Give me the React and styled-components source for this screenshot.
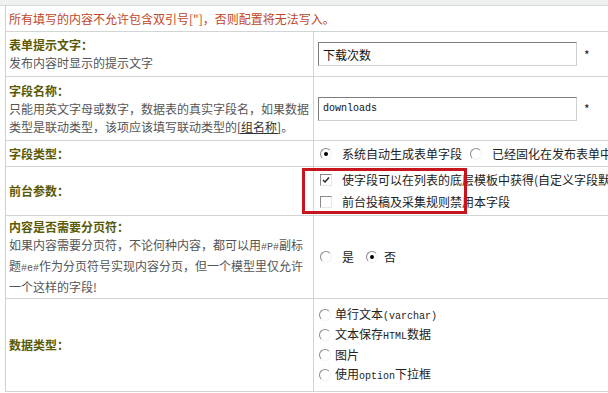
import React from 'react';
import styled, { createGlobalStyle } from 'styled-components';

const GlobalStyle = createGlobalStyle`
  body {
    margin: 0;
    background: #fff;
    font-family: "Noto Sans CJK SC", "Liberation Sans", sans-serif;
    font-size: 12px;
    color: #333;
  }
`;

const Page = styled.div`
  width: 608px;
  height: 393px;
  overflow: hidden;
`;

const TopStrip = styled.div`
  height: 5px;
  background: #eef0f1;
  border-bottom: 1px solid #d6d8d8;
`;

const Table = styled.div`
  margin-left: 5px;
  border-left: 1px solid #cfcfcf;
`;

const Notice = styled.div`
  box-sizing: border-box;
  height: 26px;
  padding-left: 3px;
  display: flex;
  align-items: center;
  color: #c2461f;
  border-bottom: 1px solid #d4d4d4;
  white-space: nowrap;
`;

const Row = styled.div`
  box-sizing: border-box;
  display: grid;
  grid-template-columns: 308px 1fr;
  height: ${p => p.h}px;
  border-bottom: 1px solid #d4d4d4;
`;

const LabelCell = styled.div`
  box-sizing: border-box;
  padding-left: 3px;
  border-right: 1px solid #d4d4d4;
  display: flex;
  flex-direction: column;
  justify-content: center;
  line-height: 18px;
  white-space: nowrap;
  overflow: hidden;
`;

const Title = styled.div`
  font-weight: 700;
  color: #5a5a06;
`;

const Desc = styled.div`
  color: #555;
`;

const GroupLink = styled.span`
  color: #333;
  text-decoration: underline;
`;

const Ascii = styled.span`
  font-family: "Liberation Mono", monospace;
  font-size: 10px;
`;

const ValueCell = styled.div`
  position: relative;
  box-sizing: border-box;
  padding-left: ${p => p.pad || 6}px;
  display: flex;
  flex-direction: ${p => (p.column ? 'column' : 'row')};
  justify-content: ${p => (p.column ? 'center' : 'flex-start')};
  align-items: ${p => (p.column ? 'flex-start' : 'center')};
  white-space: nowrap;
`;

const TextInput = styled.div`
  box-sizing: border-box;
  width: 259px;
  height: 24px;
  padding-left: 4px;
  display: flex;
  align-items: center;
  border: 1px solid;
  border-color: #7c7c7c #cfcfcf #cfcfcf #7c7c7c;
  color: #111;
  font-size: ${p => (p.mono ? '10px' : '12px')};
  font-family: ${p =>
    p.mono ? '"Liberation Mono", monospace' : '"Noto Sans CJK SC", sans-serif'};
`;

const Star = styled.span`
  margin-left: 7px;
  color: #222;
`;

const Option = styled.label`
  display: flex;
  align-items: center;
  height: ${p => p.lh || 20}px;
  margin-right: ${p => p.gap || 0}px;
  color: #222;
`;

const OptionText = styled.span`
  line-height: 16px;
`;

const Radio = styled.span`
  box-sizing: border-box;
  width: 12px;
  height: 12px;
  border-radius: 50%;
  border: 1px solid;
  border-color: #8a8a8a #f2f2f2 #f2f2f2 #8a8a8a;
  background: #fff;
  margin-right: ${p => p.mr || 10}px;
  display: flex;
  align-items: center;
  justify-content: center;
  flex-shrink: 0;

  &::after {
    content: '';
    width: 4px;
    height: 4px;
    border-radius: 50%;
    background: ${p => (p.checked ? '#000' : 'transparent')};
  }
`;

const Check = styled.span`
  box-sizing: border-box;
  width: 12px;
  height: 12px;
  border: 1px solid;
  border-color: #8a8a8a #e6e6e6 #e6e6e6 #8a8a8a;
  background: #fff;
  margin-right: 10px;
  display: flex;
  align-items: center;
  justify-content: center;
  flex-shrink: 0;
`;

const Highlight = styled.div`
  position: absolute;
  left: -12px;
  top: 1px;
  width: 165px;
  height: 46px;
  box-sizing: border-box;
  border: 3px solid #c8141c;
  pointer-events: none;
`;

const Tick = () => (
  <svg width="8" height="8" viewBox="0 0 8 8">
    <polyline points="1,4 3,6 7,1.5" fill="none" stroke="#222" strokeWidth="1.4" />
  </svg>
);

export default function App() {
  return (
    <Page>
      <GlobalStyle />
      <TopStrip />
      <Table>
        <Notice>所有填写的内容不允许包含双引号["]，否则配置将无法写入。</Notice>

        <Row h={45}>
          <LabelCell>
            <Title>表单提示文字：</Title>
            <Desc>发布内容时显示的提示文字</Desc>
          </LabelCell>
          <ValueCell pad={4}>
            <TextInput>下载次数</TextInput>
            <Star>*</Star>
          </ValueCell>
        </Row>

        <Row h={64}>
          <LabelCell>
            <Title>字段名称：</Title>
            <Desc>只能用英文字母或数字，数据表的真实字段名，如果数据</Desc>
            <Desc>
              类型是联动类型，该项应该填写联动类型的<GroupLink>[组名称]</GroupLink>。
            </Desc>
          </LabelCell>
          <ValueCell pad={4}>
            <TextInput mono>downloads</TextInput>
            <Star>*</Star>
          </ValueCell>
        </Row>

        <Row h={26}>
          <LabelCell>
            <Title>字段类型：</Title>
          </LabelCell>
          <ValueCell>
            <Option gap={8}>
              <Radio checked />
              <OptionText>系统自动生成表单字段</OptionText>
            </Option>
            <Option>
              <Radio />
              <OptionText>已经固化在发布表单中</OptionText>
            </Option>
          </ValueCell>
        </Row>

        <Row h={49}>
          <LabelCell>
            <Title>前台参数：</Title>
          </LabelCell>
          <ValueCell column>
            <Option lh={22}>
              <Check>
                <Tick />
              </Check>
              <OptionText>使字段可以在列表的底层模板中获得(自定义字段默认)</OptionText>
            </Option>
            <Option lh={22}>
              <Check />
              <OptionText>前台投稿及采集规则禁用本字段</OptionText>
            </Option>
            <Highlight />
          </ValueCell>
        </Row>

        <Row h={83}>
          <LabelCell>
            <Title>内容是否需要分页符：</Title>
            <Desc>
              如果内容需要分页符，不论何种内容，都可以用<Ascii>#P#</Ascii>副标
            </Desc>
            <Desc>
              题<Ascii>#e#</Ascii>作为分页符号实现内容分页，但一个模型里仅允许
            </Desc>
            <Desc>一个这样的字段!</Desc>
          </LabelCell>
          <ValueCell>
            <Option gap={12}>
              <Radio />
              <OptionText>是</OptionText>
            </Option>
            <Option>
              <Radio checked mr={6} />
              <OptionText>否</OptionText>
            </Option>
          </ValueCell>
        </Row>

        <Row h={93}>
          <LabelCell>
            <Title>数据类型：</Title>
          </LabelCell>
          <ValueCell column pad={5}>
            <Option lh={20}>
              <Radio mr={4} />
              <OptionText>
                单行文本<Ascii>(varchar)</Ascii>
              </OptionText>
            </Option>
            <Option lh={20}>
              <Radio mr={4} />
              <OptionText>
                文本保存<Ascii>HTML</Ascii>数据
              </OptionText>
            </Option>
            <Option lh={20}>
              <Radio mr={4} />
              <OptionText>图片</OptionText>
            </Option>
            <Option lh={20}>
              <Radio mr={4} />
              <OptionText>
                使用<Ascii>option</Ascii>下拉框
              </OptionText>
            </Option>
          </ValueCell>
        </Row>
      </Table>
    </Page>
  );
}
